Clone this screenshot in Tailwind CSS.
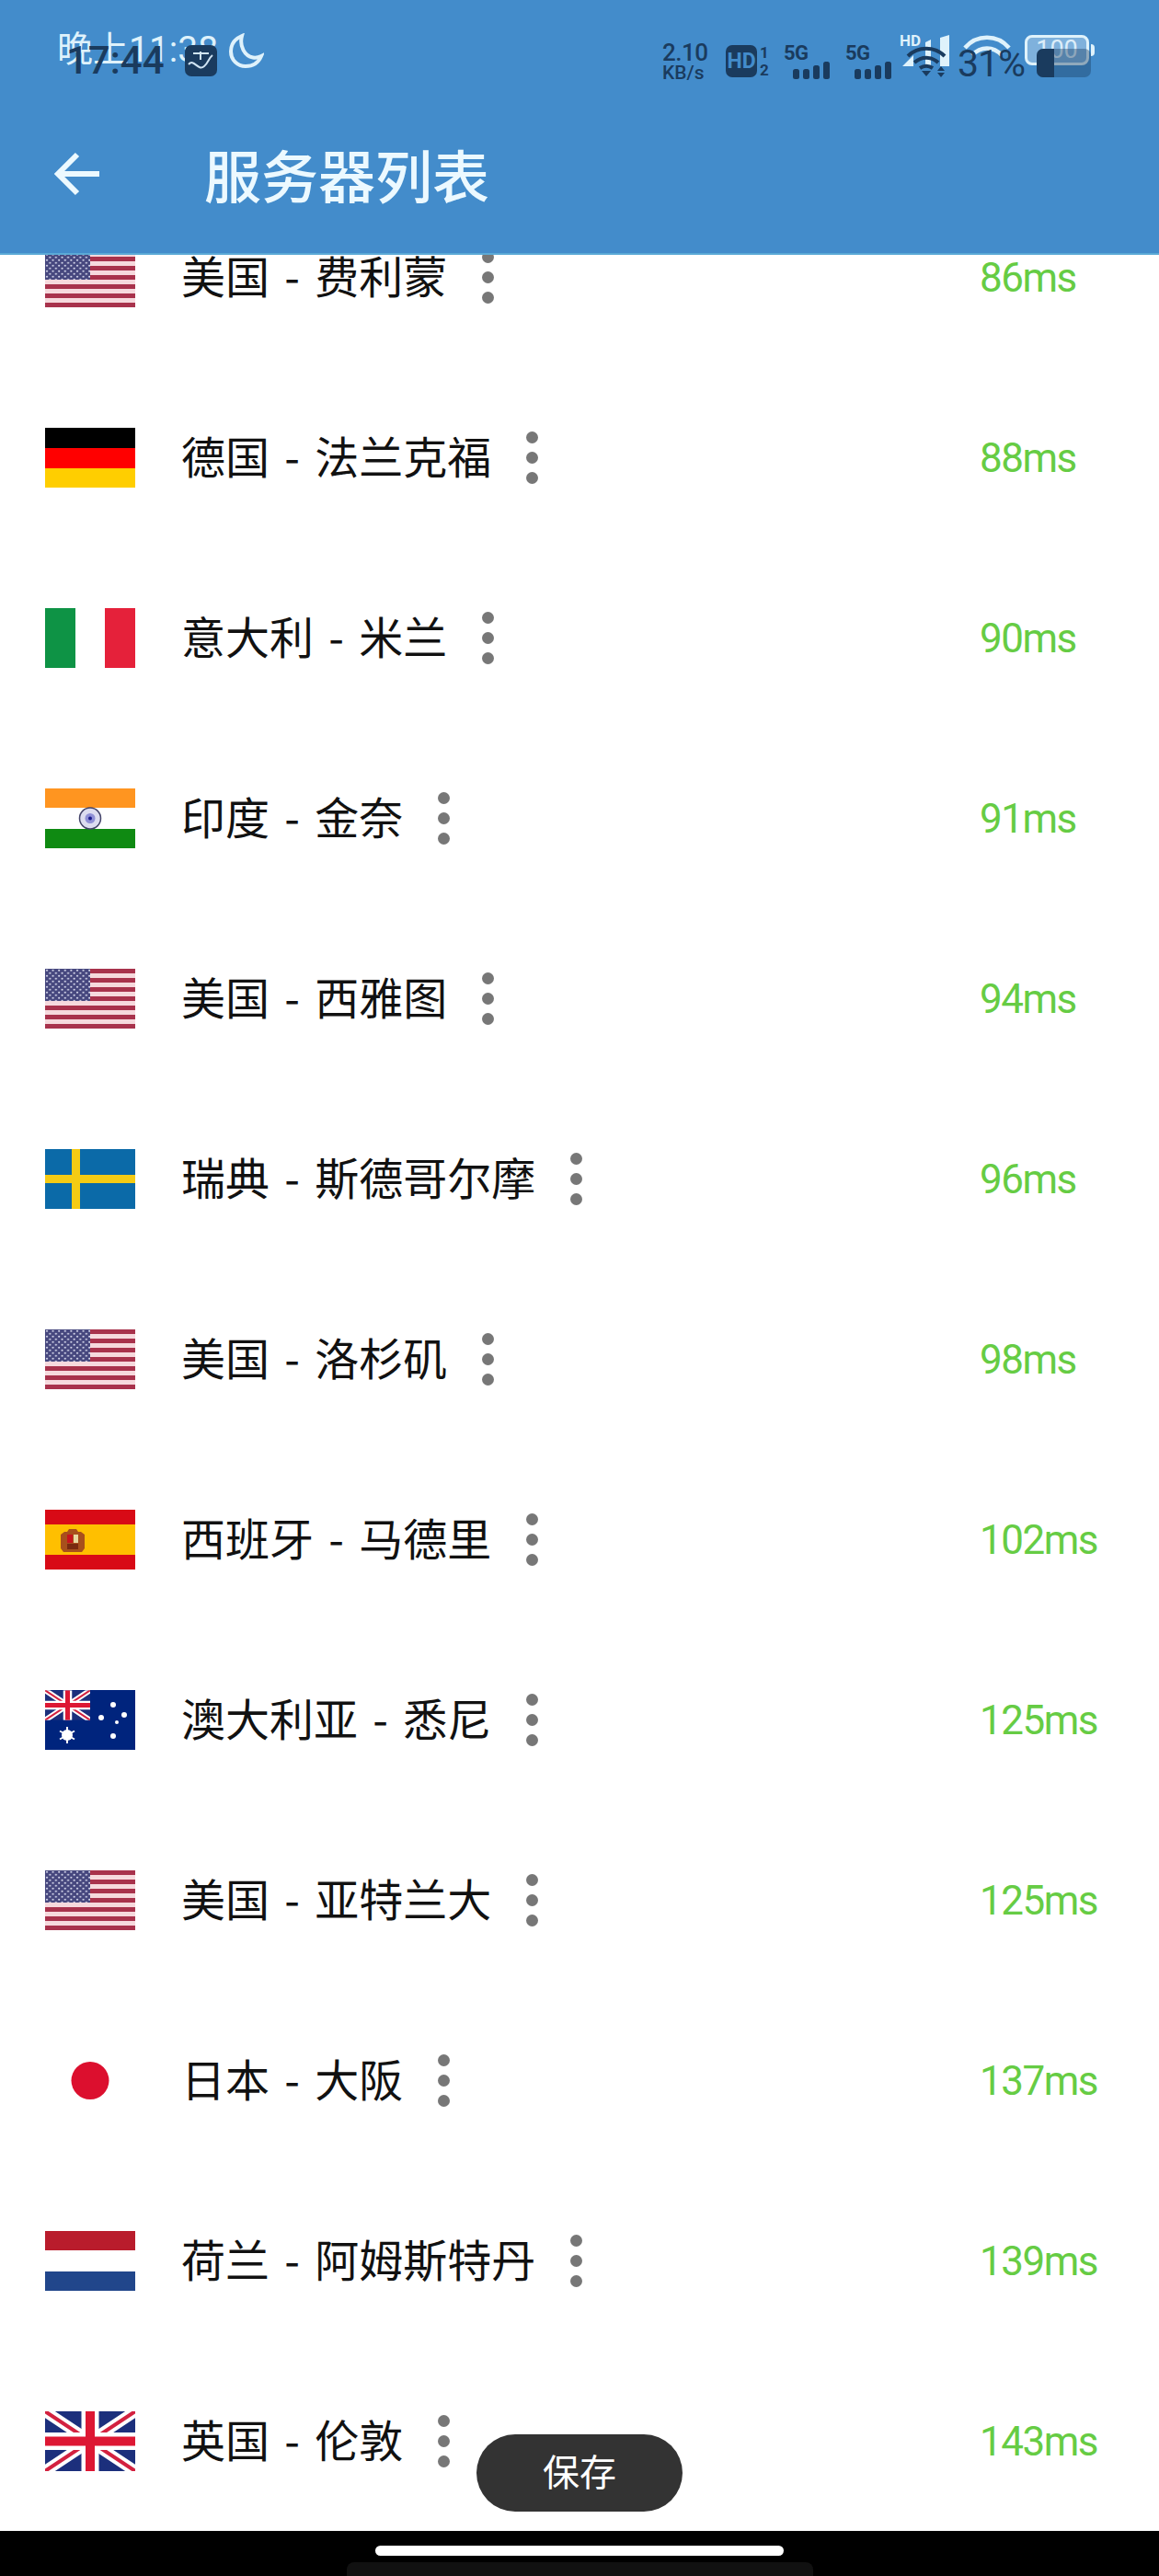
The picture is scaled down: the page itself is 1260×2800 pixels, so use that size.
<!DOCTYPE html>
<html lang="zh-CN">
<head>
    <meta charset="UTF-8">
    <meta name="viewport" content="width=device-width, initial-scale=1.0">
    <title>服务器列表</title>
    <script src="https://cdn.jsdelivr.net/npm/@tailwindcss/browser@4"></script>
</head>
<body class="bg-white font-['Noto_Sans_CJK_SC',sans-serif]">

<!-- Shared flags -->
<svg class="absolute w-0 h-0" xmlns="http://www.w3.org/2000/svg">
    <defs>
        <pattern id="stars" width="6.6" height="6" patternUnits="userSpaceOnUse">
            <circle cx="2" cy="1.8" r="1.05" fill="#d9dbee"/>
            <circle cx="5.3" cy="4.8" r="1.05" fill="#d9dbee"/>
        </pattern>
    </defs>
    <symbol id="us" viewBox="0 0 98 65">
        <rect width="98" height="65" fill="#f6d9dd"/>
        <path d="M0 2.5H98M0 12.5H98M0 22.5H98M0 32.5H98M0 42.5H98M0 52.5H98M0 62.5H98" stroke="#a8324c" stroke-width="5"/>
        <rect width="49" height="35" fill="#46477e"/>
        <rect width="49" height="35" fill="url(#stars)"/>
    </symbol>
    <symbol id="uj" viewBox="0 0 98 65">
        <rect width="98" height="65" fill="#1c2f7c"/>
        <path d="M0 0L98 65M98 0L0 65" stroke="#fff" stroke-width="12"/>
        <path d="M0 0L98 65M98 0L0 65" stroke="#d3213f" stroke-width="4"/>
        <path d="M49 0V65M0 32.5H98" stroke="#fff" stroke-width="19"/>
        <path d="M49 0V65M0 32.5H98" stroke="#dd1733" stroke-width="10"/>
    </symbol>
</svg>

<div class="relative flex flex-col h-[2800px] overflow-hidden">

    <!-- Header -->
    <header class="relative z-10 h-[277px] shrink-0 flex flex-col justify-end bg-[#438ccb] border-b-2 border-[#5aa9d6]">

        <!-- Status bar, light layer -->
        <div class="absolute inset-x-0 top-0 flex items-start text-[#dff2fb]">
            <span class="ml-[62px] mt-[29px] text-[39px] leading-[50px] w-[178px] whitespace-nowrap font-['Roboto','Noto_Sans_CJK_SC',sans-serif]">晚上11:38</span>
            <svg class="ml-[8px] mt-[36px]" width="39" height="38" viewBox="0 0 39 38" fill="none" stroke="currentColor" stroke-width="4">
                <path d="M15 3C8 6 3 12 3 20c0 9 7 16 16 16 8 0 14-4 17-11-3 1.500-6 2-9 1.500C18 25 12 14 15 3Z"/>
            </svg>
            <div class="relative ml-[691px] mt-[38px] w-[54px] h-[34px]">
                <span class="absolute left-0 -top-[3px] text-[17px] leading-[18px] font-bold font-['Roboto',sans-serif]">HD</span>
                <svg class="absolute left-0 top-0" width="54" height="34" viewBox="0 0 54 34" fill="currentColor">
                    <path d="M3 34l12-12v12ZM28 8l6-3v29h-6ZM44 3l10-3v34H44Z"/>
                </svg>
            </div>
            <svg class="ml-[15px] mt-[37px]" width="52" height="36" viewBox="0 0 52 36" fill="none" stroke="currentColor" stroke-width="4.500">
                <path d="M2 15C15 0 37 0 50 15M10 23C19 13 33 13 42 23"/>
            </svg>
            <div class="relative ml-[15px] mt-[38px] flex items-center justify-center w-[70px] h-[33px] rounded-[8px] border-[3px] border-[#dff2fb] bg-[#7fb1dc]">
                <span class="text-[27px] leading-none font-['Roboto',sans-serif] text-[#dcedf9]">100</span>
            </div>
            <div class="ml-[2px] mt-[48px] w-[4px] h-[13px] rounded-r bg-[#dff2fb]"></div>
        </div>

        <!-- Status bar, dark layer -->
        <div class="absolute inset-x-0 top-0 flex items-start text-[#1a3b5e] font-['Roboto',sans-serif]">
            <span class="ml-[72px] mt-[41px] w-[109px] text-[42px] leading-[50px] font-medium">17:44</span>
            <div class="ml-[20px] mt-[49px] w-[35px] h-[34px] rounded-[7px] bg-[#1a3b5e] flex items-center justify-center">
                <svg width="29" height="22" viewBox="0 0 29 22" fill="none" stroke="#cfe4f3" stroke-width="2">
                    <path d="M1 15c6-7 10 8 17 2 4-3 5-9 9-12M6 3h17M14 1v9"/>
                </svg>
            </div>
            <div class="ml-[484px] mt-[45px] flex flex-col w-[52px] font-medium">
                <span class="text-[26px] leading-[24px] tracking-[-0.5px]">2.10</span>
                <span class="text-[21px] leading-[20px]">KB/s</span>
            </div>
            <div class="ml-[17px] mt-[49px] w-[34px] h-[35px] rounded-[7px] bg-[#1a3b5e] flex items-center justify-center text-[23px] leading-none font-bold text-[#438ccb]">HD</div>
            <div class="ml-[3px] mt-[48px] w-[10px] flex flex-col text-[17px] leading-[19px] font-bold"><span>1</span><span>2</span></div>
            <div class="ml-[16px] mt-[48px] w-[51px]">
                <span class="block text-[22px] leading-[19px] font-bold tracking-[-0.5px]">5G</span>
                <svg class="ml-[10px]" width="41" height="19" viewBox="0 0 41 19" fill="currentColor">
                    <rect x="0" y="8" width="7" height="11" rx="2.500"/><rect x="11" y="8" width="7" height="11" rx="2.500"/><rect x="22" y="4" width="7" height="15" rx="2.500"/><rect x="33" y="0" width="7" height="19" rx="2.500"/>
                </svg>
            </div>
            <div class="ml-[16px] mt-[48px] w-[51px]">
                <span class="block text-[22px] leading-[19px] font-bold tracking-[-0.5px]">5G</span>
                <svg class="ml-[10px]" width="41" height="19" viewBox="0 0 41 19" fill="currentColor">
                    <rect x="0" y="8" width="7" height="11" rx="2.500"/><rect x="11" y="8" width="7" height="11" rx="2.500"/><rect x="22" y="4" width="7" height="15" rx="2.500"/><rect x="33" y="0" width="7" height="19" rx="2.500"/>
                </svg>
            </div>
            <svg class="ml-[15px] mt-[50px]" width="46" height="35" viewBox="0 0 46 35" fill="none" stroke="currentColor" stroke-width="4">
                <path d="M2 11C13 0 31 0 42 11M9 18c8-7 18-7 26 0M15 24c4.500-3 9.500-3 14 0"/>
                <path d="M22 33l-5-6h10ZM38 22l-4 5h8ZM38 34l-4-5h8Z" fill="currentColor" stroke="none"/>
            </svg>
            <span class="ml-[10px] mt-[45px] w-[72px] text-[41px] leading-[48px] tracking-[-1px]">31%</span>
            <div class="ml-[14px] mt-[53px] flex w-[59px] h-[31px] rounded-[7px] overflow-hidden bg-[#1a3b5e]/40">
                <div class="w-[19px] bg-[#1a3b5e]"></div>
            </div>
        </div>

        <!-- Title row -->
        <div class="flex items-center h-[172px] pl-[58px] text-[#ecf9ff]">
            <svg width="50" height="48" viewBox="0 0 50 48" fill="none" stroke="currentColor" stroke-width="6">
                <path d="M4 24H50M26 3L5 24L26 45"/>
            </svg>
            <h1 class="ml-[114px] text-[62px] leading-none font-medium">服务器列表</h1>
        </div>
    </header>

    <!-- Server list, first row runs under the header -->
    <ul class="-mt-[74px] text-[48px] leading-none text-[#111]">
        <li class="flex items-center h-[196px]">
            <svg class="ml-[49px] shrink-0" width="98" height="65"><use href="#us"/></svg>
            <span class="ml-[50px] pb-[6px] [word-spacing:5.5px]">美国 - 费利蒙</span>
            <span class="ml-[38px] flex flex-col gap-[9px]"><i class="w-[13px] h-[13px] rounded-full bg-[#777]"></i><i class="w-[13px] h-[13px] rounded-full bg-[#777]"></i><i class="w-[13px] h-[13px] rounded-full bg-[#777]"></i></span>
            <span class="ml-auto w-[195px] pt-[2px] text-[44px] font-['Roboto',sans-serif] tracking-[-1.5px] text-[#66cc44]">86ms</span>
        </li>
        <li class="flex items-center h-[196px]">
            <svg class="ml-[49px] shrink-0" width="98" height="65" viewBox="0 0 98 65"><rect width="98" height="22" fill="#000"/><rect y="22" width="98" height="22" fill="#f00"/><rect y="44" width="98" height="21" fill="#ffce00"/></svg>
            <span class="ml-[50px] pb-[6px] [word-spacing:5.5px]">德国 - 法兰克福</span>
            <span class="ml-[38px] flex flex-col gap-[9px]"><i class="w-[13px] h-[13px] rounded-full bg-[#777]"></i><i class="w-[13px] h-[13px] rounded-full bg-[#777]"></i><i class="w-[13px] h-[13px] rounded-full bg-[#777]"></i></span>
            <span class="ml-auto w-[195px] pt-[2px] text-[44px] font-['Roboto',sans-serif] tracking-[-1.5px] text-[#66cc44]">88ms</span>
        </li>
        <li class="flex items-center h-[196px]">
            <svg class="ml-[49px] shrink-0" width="98" height="65" viewBox="0 0 98 65"><rect width="33" height="65" fill="#0e9345"/><rect x="65" width="33" height="65" fill="#e5213a"/></svg>
            <span class="ml-[50px] pb-[6px] [word-spacing:5.5px]">意大利 - 米兰</span>
            <span class="ml-[38px] flex flex-col gap-[9px]"><i class="w-[13px] h-[13px] rounded-full bg-[#777]"></i><i class="w-[13px] h-[13px] rounded-full bg-[#777]"></i><i class="w-[13px] h-[13px] rounded-full bg-[#777]"></i></span>
            <span class="ml-auto w-[195px] pt-[2px] text-[44px] font-['Roboto',sans-serif] tracking-[-1.5px] text-[#66cc44]">90ms</span>
        </li>
        <li class="flex items-center h-[196px]">
            <svg class="ml-[49px] shrink-0" width="98" height="65" viewBox="0 0 98 65"><rect width="98" height="21" fill="#ff9520"/><rect y="44" width="98" height="21" fill="#0f8a12"/><circle cx="49" cy="32.500" r="11.500" fill="#dcdcf0" stroke="#44446a" stroke-width="1.500"/><circle cx="49" cy="32.500" r="5.500" fill="#8f8fd6"/><circle cx="49" cy="32.500" r="2" fill="#1a1a8c"/></svg>
            <span class="ml-[50px] pb-[6px] [word-spacing:5.5px]">印度 - 金奈</span>
            <span class="ml-[38px] flex flex-col gap-[9px]"><i class="w-[13px] h-[13px] rounded-full bg-[#777]"></i><i class="w-[13px] h-[13px] rounded-full bg-[#777]"></i><i class="w-[13px] h-[13px] rounded-full bg-[#777]"></i></span>
            <span class="ml-auto w-[195px] pt-[2px] text-[44px] font-['Roboto',sans-serif] tracking-[-1.5px] text-[#66cc44]">91ms</span>
        </li>
        <li class="flex items-center h-[196px]">
            <svg class="ml-[49px] shrink-0" width="98" height="65"><use href="#us"/></svg>
            <span class="ml-[50px] pb-[6px] [word-spacing:5.5px]">美国 - 西雅图</span>
            <span class="ml-[38px] flex flex-col gap-[9px]"><i class="w-[13px] h-[13px] rounded-full bg-[#777]"></i><i class="w-[13px] h-[13px] rounded-full bg-[#777]"></i><i class="w-[13px] h-[13px] rounded-full bg-[#777]"></i></span>
            <span class="ml-auto w-[195px] pt-[2px] text-[44px] font-['Roboto',sans-serif] tracking-[-1.5px] text-[#66cc44]">94ms</span>
        </li>
        <li class="flex items-center h-[196px]">
            <svg class="ml-[49px] shrink-0" width="98" height="65" viewBox="0 0 98 65"><rect width="98" height="65" fill="#0b6aa8"/><rect x="29" width="9" height="65" fill="#f5cb14"/><rect y="28" width="98" height="9" fill="#f5cb14"/></svg>
            <span class="ml-[50px] pb-[6px] [word-spacing:5.5px]">瑞典 - 斯德哥尔摩</span>
            <span class="ml-[38px] flex flex-col gap-[9px]"><i class="w-[13px] h-[13px] rounded-full bg-[#777]"></i><i class="w-[13px] h-[13px] rounded-full bg-[#777]"></i><i class="w-[13px] h-[13px] rounded-full bg-[#777]"></i></span>
            <span class="ml-auto w-[195px] pt-[2px] text-[44px] font-['Roboto',sans-serif] tracking-[-1.5px] text-[#66cc44]">96ms</span>
        </li>
        <li class="flex items-center h-[196px]">
            <svg class="ml-[49px] shrink-0" width="98" height="65"><use href="#us"/></svg>
            <span class="ml-[50px] pb-[6px] [word-spacing:5.5px]">美国 - 洛杉矶</span>
            <span class="ml-[38px] flex flex-col gap-[9px]"><i class="w-[13px] h-[13px] rounded-full bg-[#777]"></i><i class="w-[13px] h-[13px] rounded-full bg-[#777]"></i><i class="w-[13px] h-[13px] rounded-full bg-[#777]"></i></span>
            <span class="ml-auto w-[195px] pt-[2px] text-[44px] font-['Roboto',sans-serif] tracking-[-1.5px] text-[#66cc44]">98ms</span>
        </li>
        <li class="flex items-center h-[196px]">
            <svg class="ml-[49px] shrink-0" width="98" height="65" viewBox="0 0 98 65"><rect width="98" height="65" fill="#d80a16"/><rect y="16" width="98" height="33" fill="#ffbf00"/><path d="M17 27l4-3h3l2-3h8l2 3h3l4 3v15l-3 4H20l-3-4Z" fill="#a8501c"/><rect x="24" y="27" width="6" height="9" fill="#c8141c"/><rect x="31" y="27" width="5" height="9" fill="#e8d8a0"/><rect x="24" y="37" width="12" height="6" fill="#7a2a10"/></svg>
            <span class="ml-[50px] pb-[6px] [word-spacing:5.5px]">西班牙 - 马德里</span>
            <span class="ml-[38px] flex flex-col gap-[9px]"><i class="w-[13px] h-[13px] rounded-full bg-[#777]"></i><i class="w-[13px] h-[13px] rounded-full bg-[#777]"></i><i class="w-[13px] h-[13px] rounded-full bg-[#777]"></i></span>
            <span class="ml-auto w-[195px] pt-[2px] text-[44px] font-['Roboto',sans-serif] tracking-[-1.5px] text-[#66cc44]">102ms</span>
        </li>
        <li class="flex items-center h-[196px]">
            <svg class="ml-[49px] shrink-0" width="98" height="65" viewBox="0 0 98 65"><rect width="98" height="65" fill="#00247d"/><svg width="49" height="33" viewBox="0 0 98 65"><use href="#uj" width="98" height="65"/></svg><g fill="#fff"><circle cx="24" cy="49" r="6"/><path d="M24 40v18M16 44.500l16 9M16 53.500l16-9" stroke="#fff" stroke-width="2"/><circle cx="74" cy="16" r="3"/><circle cx="61" cy="30" r="3"/><circle cx="86" cy="27" r="3"/><circle cx="78" cy="35" r="2"/><circle cx="74" cy="50" r="3"/></g></svg>
            <span class="ml-[50px] pb-[6px] [word-spacing:5.5px]">澳大利亚 - 悉尼</span>
            <span class="ml-[38px] flex flex-col gap-[9px]"><i class="w-[13px] h-[13px] rounded-full bg-[#777]"></i><i class="w-[13px] h-[13px] rounded-full bg-[#777]"></i><i class="w-[13px] h-[13px] rounded-full bg-[#777]"></i></span>
            <span class="ml-auto w-[195px] pt-[2px] text-[44px] font-['Roboto',sans-serif] tracking-[-1.5px] text-[#66cc44]">125ms</span>
        </li>
        <li class="flex items-center h-[196px]">
            <svg class="ml-[49px] shrink-0" width="98" height="65"><use href="#us"/></svg>
            <span class="ml-[50px] pb-[6px] [word-spacing:5.5px]">美国 - 亚特兰大</span>
            <span class="ml-[38px] flex flex-col gap-[9px]"><i class="w-[13px] h-[13px] rounded-full bg-[#777]"></i><i class="w-[13px] h-[13px] rounded-full bg-[#777]"></i><i class="w-[13px] h-[13px] rounded-full bg-[#777]"></i></span>
            <span class="ml-auto w-[195px] pt-[2px] text-[44px] font-['Roboto',sans-serif] tracking-[-1.5px] text-[#66cc44]">125ms</span>
        </li>
        <li class="flex items-center h-[196px]">
            <svg class="ml-[49px] shrink-0" width="98" height="65" viewBox="0 0 98 65"><circle cx="49" cy="32.500" r="20.500" fill="#dc0f2e"/></svg>
            <span class="ml-[50px] pb-[6px] [word-spacing:5.5px]">日本 - 大阪</span>
            <span class="ml-[38px] flex flex-col gap-[9px]"><i class="w-[13px] h-[13px] rounded-full bg-[#777]"></i><i class="w-[13px] h-[13px] rounded-full bg-[#777]"></i><i class="w-[13px] h-[13px] rounded-full bg-[#777]"></i></span>
            <span class="ml-auto w-[195px] pt-[2px] text-[44px] font-['Roboto',sans-serif] tracking-[-1.5px] text-[#66cc44]">137ms</span>
        </li>
        <li class="flex items-center h-[196px]">
            <svg class="ml-[49px] shrink-0" width="98" height="65" viewBox="0 0 98 65"><rect width="98" height="21" fill="#b91c2c"/><rect y="44" width="98" height="21" fill="#21468b"/></svg>
            <span class="ml-[50px] pb-[6px] [word-spacing:5.5px]">荷兰 - 阿姆斯特丹</span>
            <span class="ml-[38px] flex flex-col gap-[9px]"><i class="w-[13px] h-[13px] rounded-full bg-[#777]"></i><i class="w-[13px] h-[13px] rounded-full bg-[#777]"></i><i class="w-[13px] h-[13px] rounded-full bg-[#777]"></i></span>
            <span class="ml-auto w-[195px] pt-[2px] text-[44px] font-['Roboto',sans-serif] tracking-[-1.5px] text-[#66cc44]">139ms</span>
        </li>
        <li class="flex items-center h-[196px]">
            <svg class="ml-[49px] shrink-0" width="98" height="65"><use href="#uj"/></svg>
            <span class="ml-[50px] pb-[6px] [word-spacing:5.5px]">英国 - 伦敦</span>
            <span class="ml-[38px] flex flex-col gap-[9px]"><i class="w-[13px] h-[13px] rounded-full bg-[#777]"></i><i class="w-[13px] h-[13px] rounded-full bg-[#777]"></i><i class="w-[13px] h-[13px] rounded-full bg-[#777]"></i></span>
            <span class="ml-auto w-[195px] pt-[2px] text-[44px] font-['Roboto',sans-serif] tracking-[-1.5px] text-[#66cc44]">143ms</span>
        </li>
    </ul>

    <!-- Save toast -->
    <div class="absolute left-[518px] top-[2646px] z-10 flex items-center justify-center w-[224px] h-[84px] pb-[6px] rounded-[42px] bg-[#333] text-[40px] text-white">保存</div>

    <!-- Navigation bar -->
    <div class="relative z-10 flex-1 bg-black flex flex-col items-center">
        <div class="mt-[16px] w-[444px] h-[11px] rounded-full bg-white"></div>
        <div class="mt-[7px] w-[507px] flex-1 rounded-t-lg bg-[#111]"></div>
    </div>
</div>

</body>
</html>
